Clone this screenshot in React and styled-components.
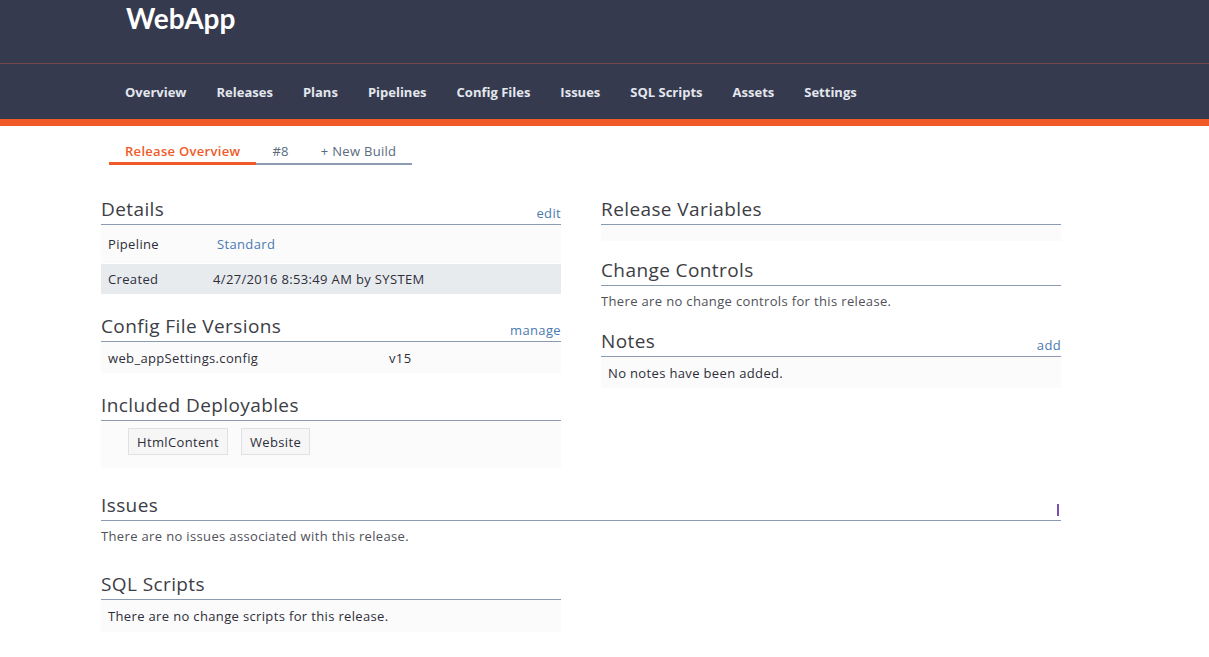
import React from "react";
import styled, { createGlobalStyle, css } from "styled-components";

const GlobalStyle = createGlobalStyle`
  html, body { margin: 0; padding: 0; background: #ffffff; }
  body { font-family: "Open Sans", "Liberation Sans", sans-serif; color: #333; }
  * { box-sizing: border-box; }
`;

const Page = styled.div`
  width: 1209px;
  min-height: 657px;
`;

const TopBar = styled.header`
  height: 64px;
  background: #363a4e;
  border-bottom: 1px solid #74484a;
  padding-left: 126px;
`;

const Brand = styled.div`
  font-family: Lato, sans-serif;
  font-size: 28px;
  font-weight: 700;
  color: #ffffff;
  line-height: 36px;
`;

const Nav = styled.nav`
  height: 55px;
  background: #363a4e;
  border-bottom: 7px solid #f05a28;
  display: flex;
  align-items: center;
  gap: 30px;
  padding-left: 125px;
  box-sizing: content-box;
`;

const NavItem = styled.a`
  color: #e3e7ee;
  font-size: 13px;
  font-weight: 700;
  text-decoration: none;
  padding-top: 1px;
`;

const Tabs = styled.div`
  display: flex;
  margin: 14px 0 0 109px;
`;

const Tab = styled.a`
  font-size: 13px;
  letter-spacing: 0.3px;
  line-height: 22px;
  padding: 0 16px 0;
  color: #5a6b80;
  text-decoration: none;
  border-bottom: 2px solid #8d9cb0;
  ${(p) =>
    p.$active &&
    css`
      color: #f05a28;
      font-weight: 600;
      border-bottom: 3px solid #f05a28;
    `}
`;

const Main = styled.main`
  width: 960px;
  margin-left: 101px;
  padding-top: 33px;
  display: grid;
  grid-template-columns: 460px 460px;
  column-gap: 40px;
  align-items: start;
`;

const Column = styled.div`
  display: flex;
  flex-direction: column;
`;

const Section = styled.section`
  margin-top: ${(p) => p.$mt || 0}px;
  ${(p) => p.$wide && css`grid-column: 1 / span 2;`}
  ${(p) => p.$left && css`grid-column: 1;`}
`;

const SectionHeader = styled.div`
  display: flex;
  justify-content: space-between;
  align-items: flex-end;
  border-bottom: 1px solid #8b9bb0;
  padding-bottom: 3px;
  position: relative;
`;

const Title = styled.h2`
  margin: 0;
  font-size: 19px;
  letter-spacing: 0.4px;
  font-weight: 400;
  line-height: 23px;
  color: #3d3d45;
`;

const Action = styled.a`
  font-size: 13px;
  letter-spacing: 0.35px;
  color: #4b7ab2;
  text-decoration: none;
  line-height: 16px;
  padding-bottom: 0;
`;

const Caret = styled.span`
  position: absolute;
  right: 2px;
  bottom: 4px;
  width: 2px;
  height: 12px;
  background: #7a4fb0;
`;

const Row = styled.div`
  display: flex;
  align-items: center;
  height: ${(p) => p.$h || 30}px;
  padding-left: 7px;
  background: ${(p) => (p.$shade ? "#e7ebee" : "#fbfbfb")};
  font-size: 13px;
  letter-spacing: 0.35px;
  color: #2e2e3a;
  ${(p) => p.$gapTop && css`margin-top: 1px;`}
`;

const Label = styled.span`
  width: ${(p) => p.$w}px;
  flex: none;
`;

const Value = styled.span`
  color: ${(p) => (p.$link ? "#4b7ab2" : "#2e2e3a")};
`;

const TagBox = styled.div`
  background: #fbfbfb;
  height: 47px;
  padding: 7px 0 0 27px;
  display: flex;
  gap: 13px;
  align-items: flex-start;
`;

const Tag = styled.span`
  display: inline-flex;
  align-items: center;
  height: 27px;
  padding: 0 8px;
  border: 1px solid #e1e1e1;
  background: #f6f6f6;
  font-size: 13px;
  letter-spacing: 0.35px;
  color: #2e2e3a;
`;

const Plain = styled.p`
  margin: 0;
  padding-top: ${(p) => p.$pt || 8}px;
  font-size: 13px;
  letter-spacing: 0.35px;
  line-height: 16px;
  color: #50505a;
`;

const EmptyBox = styled.div`
  height: 16px;
  background: #fbfbfb;
`;

export default function App() {
  const nav = ["Overview", "Releases", "Plans", "Pipelines", "Config Files", "Issues", "SQL Scripts", "Assets", "Settings"];
  return (
    <Page>
      <GlobalStyle />
      <TopBar>
        <Brand>WebApp</Brand>
      </TopBar>
      <Nav>
        {nav.map((n) => (
          <NavItem key={n}>{n}</NavItem>
        ))}
      </Nav>
      <Tabs>
        <Tab $active>Release Overview</Tab>
        <Tab>#8</Tab>
        <Tab>+ New Build</Tab>
      </Tabs>
      <Main>
        <Column>
          <Section>
            <SectionHeader>
              <Title>Details</Title>
              <Action>edit</Action>
            </SectionHeader>
            <Row $h={38}>
              <Label $w={109}>Pipeline</Label>
              <Value $link>Standard</Value>
            </Row>
            <Row $h={30} $shade $gapTop>
              <Label $w={105}>Created</Label>
              <Value>4/27/2016 8:53:49 AM by SYSTEM</Value>
            </Row>
          </Section>
          <Section $mt={21}>
            <SectionHeader>
              <Title>Config File Versions</Title>
              <Action>manage</Action>
            </SectionHeader>
            <Row $h={31}>
              <Label $w={281}>web_appSettings.config</Label>
              <Value>v15</Value>
            </Row>
          </Section>
          <Section $mt={21}>
            <SectionHeader>
              <Title>Included Deployables</Title>
            </SectionHeader>
            <TagBox>
              <Tag>HtmlContent</Tag>
              <Tag>Website</Tag>
            </TagBox>
          </Section>
        </Column>
        <Column>
          <Section>
            <SectionHeader>
              <Title>Release Variables</Title>
            </SectionHeader>
            <EmptyBox />
          </Section>
          <Section $mt={18}>
            <SectionHeader>
              <Title>Change Controls</Title>
            </SectionHeader>
            <Plain $pt={7}>There are no change controls for this release.</Plain>
          </Section>
          <Section $mt={21}>
            <SectionHeader>
              <Title>Notes</Title>
              <Action>add</Action>
            </SectionHeader>
            <Row $h={31}>
              <Value>No notes have been added.</Value>
            </Row>
          </Section>
        </Column>
        <Section $wide $mt={26}>
          <SectionHeader>
            <Title>Issues</Title>
            <Caret />
          </SectionHeader>
          <Plain $pt={7}>There are no issues associated with this release.</Plain>
        </Section>
        <Section $left $mt={29}>
          <SectionHeader>
            <Title>SQL Scripts</Title>
          </SectionHeader>
          <Row $h={32}>
            <Value>There are no change scripts for this release.</Value>
          </Row>
        </Section>
      </Main>
    </Page>
  );
}
